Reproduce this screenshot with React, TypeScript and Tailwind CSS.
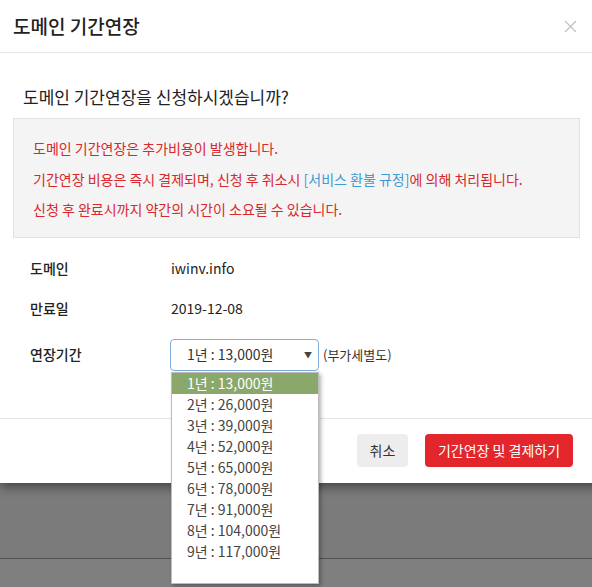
import React from 'react';

const options = [
  '1년 : 13,000원',
  '2년 : 26,000원',
  '3년 : 39,000원',
  '4년 : 52,000원',
  '5년 : 65,000원',
  '6년 : 78,000원',
  '7년 : 91,000원',
  '8년 : 104,000원',
  '9년 : 117,000원',
];

export default function App() {
  return (
    <div
      className="relative w-[592px] h-[587px] overflow-hidden bg-[#7b7b7b]"
      style={{ fontFamily: '"Noto Sans CJK KR", "Noto Sans", sans-serif' }}
    >
      {/* 모달 */}
      <div className="relative z-10 w-[620px] bg-white shadow-[0_4px_10px_rgba(0,0,0,0.45)]">
        <div className="h-[53px] flex items-center justify-between px-[13px] border-b border-[#e5e5e5]">
          <h1 className="text-[19px] text-[#222] font-medium">도메인 기간연장</h1>
          <svg width="13" height="13" viewBox="0 0 13 13" className="mr-[30px]">
            <path d="M1 1L12 12M12 1L1 12" stroke="#c4c4c4" strokeWidth="1.4" />
          </svg>
        </div>

        <div className="pt-[32px] pr-[40px]">
          <p className="pl-[23px] text-[17px] leading-[24px] text-[#222]">도메인 기간연장을 신청하시겠습니까?</p>

          <div className="mt-[9px] ml-[13px] w-[567px] bg-[#f4f4f4] border border-[#e2e2e2] pl-[19px] pt-[14px] pb-[12px] text-[14px] leading-[30.5px] text-[#d9272d]">
            <p>도메인 기간연장은 추가비용이 발생합니다.</p>
            <p>
              기간연장 비용은 즉시 결제되며, 신청 후 취소시 <span className="text-[#3d9bd6]">[서비스 환불 규정]</span>에 의해 처리됩니다.
            </p>
            <p>신청 후 완료시까지 약간의 시간이 소요될 수 있습니다.</p>
          </div>

          <div className="mt-[11px] pl-[30px] text-[14px] text-[#222]">
            <div className="h-[40px] flex items-center">
              <span className="w-[141px] font-medium">도메인</span>
              <span>iwinv.info</span>
            </div>
            <div className="h-[40px] flex items-center">
              <span className="w-[141px] font-medium">만료일</span>
              <span>2019-12-08</span>
            </div>
            <div className="mt-[10px] h-[32px] flex items-center">
              <span className="w-[140px] font-medium">연장기간</span>
              <div className="relative">
                <div className="w-[149px] h-[32px] rounded-[4px] border border-[#80aede] flex items-center pl-[16px] pr-[6px] justify-between text-[#333]">
                  <span>1년 : 13,000원</span>
                  <span className="text-[8px] text-[#444]">▼</span>
                </div>
                {/* 드롭다운 목록 */}
                <ul className="absolute left-[1px] top-[33px] w-[148px] h-[212px] bg-white border border-[#bdbdbd] shadow-[2px_2px_4px_rgba(0,0,0,0.3)] text-[14px] text-[#444]">
                  {options.map((o, i) => (
                    <li
                      key={o}
                      className={`h-[21px] leading-[21px] pl-[15px] ${i === 0 ? 'bg-[#8aa86b] text-white' : ''}`}
                    >
                      {o}
                    </li>
                  ))}
                </ul>
              </div>
              <span className="ml-[4px] text-[13px] text-[#333]">(부가세별도)</span>
            </div>
          </div>
        </div>

        <div className="mt-[47px] border-t border-[#e5e5e5] w-[592px] flex justify-end gap-[17px] pt-[15px] pb-[16px] pr-[19px]">
          <button className="w-[51px] h-[33px] rounded-[4px] bg-[#ededed] text-[14px] text-[#333]">취소</button>
          <button className="w-[148px] h-[33px] rounded-[4px] bg-[#e2262c] text-[14px] text-white">기간연장 및 결제하기</button>
        </div>
      </div>

      <div className="absolute left-0 right-0 top-[558px] h-[1px] bg-[#505050]" />
      <div className="absolute left-0 right-0 top-[559px] bottom-0 bg-[#7f7f7f]" />
    </div>
  );
}
